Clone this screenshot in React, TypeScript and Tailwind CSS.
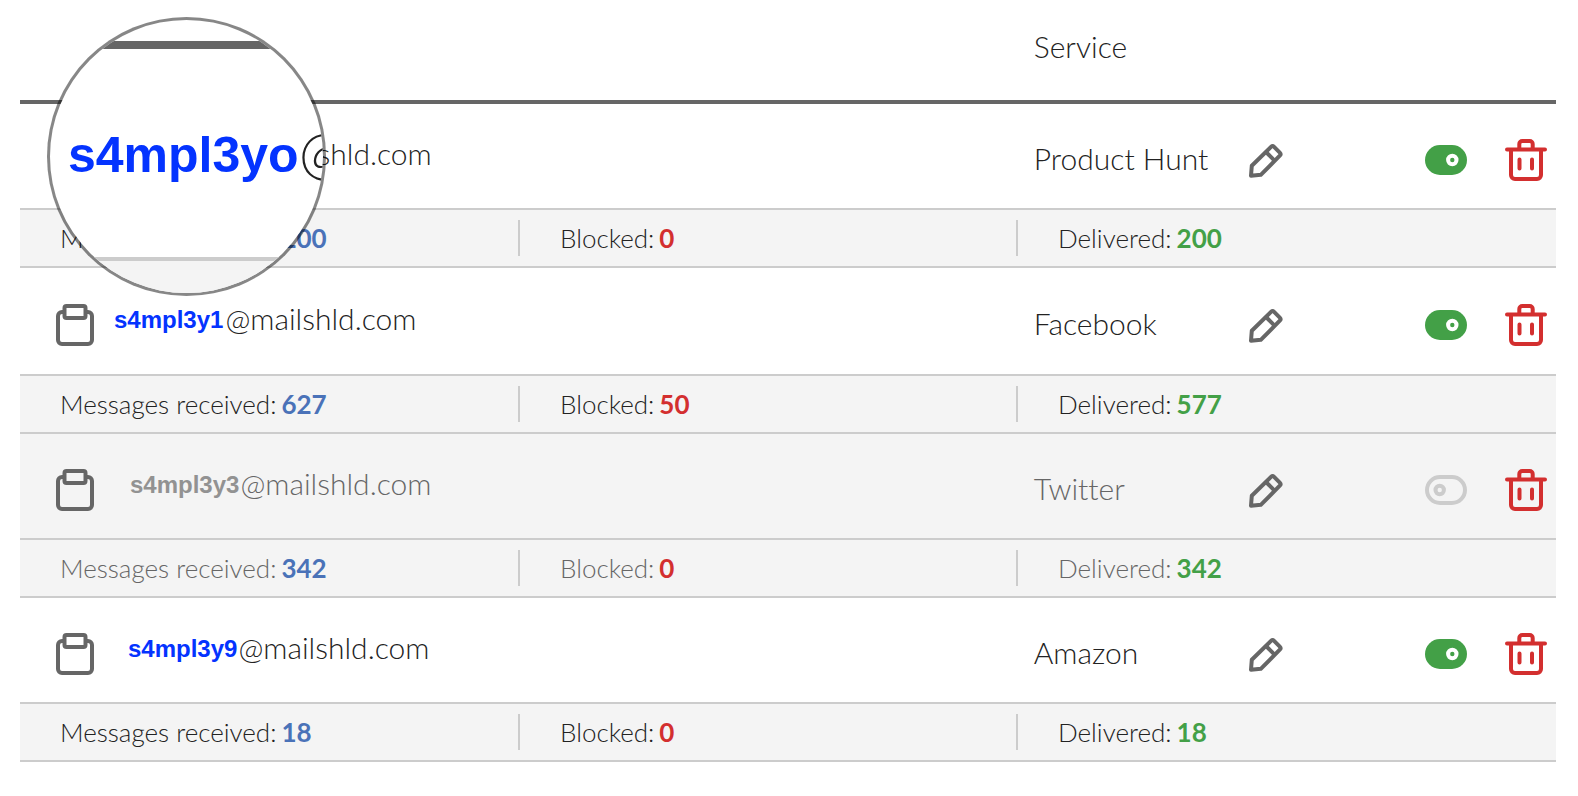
import { useState } from 'react';

interface Alias {
  id: string;
  domain: string;
  service: string;
  received: number;
  blocked: number;
  delivered: number;
  enabled: boolean;
  rowClass: string;
  indentClass: string;
  gapClass: string;
}

const initialAliases: Alias[] = [
  { id: 's4mpl3yo', domain: '@mailshld.com', service: 'Product Hunt', received: 200, blocked: 0, delivered: 200, enabled: true, rowClass: 'h-[106px]', indentClass: 'ml-9', gapClass: '' },
  { id: 's4mpl3y1', domain: '@mailshld.com', service: 'Facebook', received: 627, blocked: 50, delivered: 577, enabled: true, rowClass: 'h-[108px]', indentClass: 'ml-5', gapClass: 'gap-[2px]' },
  { id: 's4mpl3y3', domain: '@mailshld.com', service: 'Twitter', received: 342, blocked: 0, delivered: 342, enabled: false, rowClass: 'h-[106px]', indentClass: 'ml-9', gapClass: 'gap-px' },
  { id: 's4mpl3y9', domain: '@mailshld.com', service: 'Amazon', received: 18, blocked: 0, delivered: 18, enabled: true, rowClass: 'h-[106px]', indentClass: 'ml-[34px]', gapClass: 'gap-px' },
];

function ClipboardIcon() {
  return (
    <svg width="38" height="42" viewBox="0 0 38 42" fill="none" stroke="#666666" strokeWidth="4" strokeLinejoin="round">
      <path d="M8.5 8H6a4 4 0 0 0-4 4v24a4 4 0 0 0 4 4h26a4 4 0 0 0 4-4V12a4 4 0 0 0-4-4h-2.500" />
      <rect x="8.500" y="2" width="21" height="12" rx="2" />
    </svg>
  );
}

function PencilIcon() {
  return (
    <svg width="34" height="36" viewBox="0 -2 34 36" fill="none" stroke="#666666" strokeWidth="4" strokeLinejoin="round">
      <path d="M2 31.800 2.800 21.700 22 2.900a2.200 2.200 0 0 1 3.100 0l5.700 5.700a2.200 2.200 0 0 1 0 3.100L11.800 30.800z" />
      <path d="m17 8 8.800 8.800" />
    </svg>
  );
}

function ToggleIcon({ on }: { on: boolean }) {
  if (on) {
    return (
      <svg width="42" height="30" viewBox="0 0 42 30">
        <rect width="42" height="30" rx="15" fill="#43a047" />
        <circle cx="27.300" cy="15" r="4.200" fill="none" stroke="#ffffff" strokeWidth="4" />
      </svg>
    );
  }
  return (
    <svg width="42" height="30" viewBox="0 0 42 30" fill="none" stroke="#cccccc" strokeWidth="4">
      <rect x="2" y="2" width="38" height="26" rx="13" />
      <circle cx="14.700" cy="15" r="4.200" />
    </svg>
  );
}

function TrashIcon() {
  return (
    <svg width="42" height="42" viewBox="0 0 42 42" fill="none" stroke="#d32f2f" strokeWidth="4" strokeLinecap="round" strokeLinejoin="round">
      <path d="M2 10.400h38" />
      <path d="M14.300 10V5a3 3 0 0 1 3-3h7.400a3 3 0 0 1 3 3v5" strokeLinecap="butt" />
      <path d="M6 11v25a4 4 0 0 0 4 4h22a4 4 0 0 0 4-4V11" />
      <path d="M14.500 20.500v9M27 20.500v9" />
    </svg>
  );
}

function Magnifier({ id }: { id: string }) {
  return (
    <div className="absolute left-[47px] top-[17px] w-[279px] h-[279px] rounded-full border-3 border-black/47 bg-white bg-clip-padding overflow-hidden pointer-events-none" aria-hidden="true">
      <div className="h-[29px] border-b-8 border-[#666666]" />
      <div className="h-[208px] pl-[18px] pt-1 flex items-center whitespace-nowrap">
        <span className="font-['Liberation_Sans',sans-serif] font-bold text-[50px] text-[#0433ff]">{id}</span>
        <span className="text-[60px] pb-2">@</span>
      </div>
      <div className="h-10 border-t-4 border-[#cccccc] bg-[#f4f4f4]" />
    </div>
  );
}

interface StatProps {
  label: string;
  value: number;
  valueClass: string;
}

function Stat({ label, value, valueClass }: StatProps) {
  return (
    <div className="pl-10 flex gap-[5px]">
      <span>{label}:</span>
      <span className={`font-bold ${valueClass}`}>{value}</span>
    </div>
  );
}

export default function App() {
  const [aliases, setAliases] = useState(initialAliases);

  const toggleAlias = (id: string) => {
    setAliases(aliases.map((a) => (a.id === id ? { ...a, enabled: !a.enabled } : a)));
  };

  const removeAlias = (id: string) => {
    setAliases(aliases.filter((a) => a.id !== id));
  };

  return (
    <main className="relative bg-white pl-5 pr-[22px] font-['Lato',sans-serif] font-light text-[#222222] [font-variant-ligatures:none]">
      <table className="w-full table-fixed border-separate border-spacing-0">
        <thead>
          <tr className="h-[104px] text-left text-[30px]">
            <th className="w-[66%] border-b-4 border-[#666666]" aria-label="Address" />
            <th className="w-[14%] border-b-4 border-[#666666] font-light pb-2">Service</th>
            <th className="w-[20%] border-b-4 border-[#666666]" aria-label="Actions" />
          </tr>
        </thead>
        {aliases.map((alias) => (
          <tbody key={alias.id} className={alias.enabled ? 'text-[#222222]' : 'text-[#666666]'}>
            <tr className={`${alias.rowClass} text-[30px] ${alias.enabled ? 'bg-white' : 'bg-[#f4f4f4]'}`}>
              <td className="border-b-2 border-[#cccccc] pl-9 pt-2">
                <div className="flex items-center">
                  <button type="button" className="cursor-pointer" aria-label={`Copy ${alias.id}${alias.domain}`}>
                    <ClipboardIcon />
                  </button>
                  <div className={`flex items-center pb-3.5 ${alias.indentClass} ${alias.gapClass}`}>
                    <span className={`pt-1 font-['Liberation_Sans',sans-serif] font-bold text-2xl ${alias.enabled ? 'text-[#0433ff]' : 'text-[#929292]'}`}>
                      {alias.id}
                    </span>
                    <span>{alias.domain}</span>
                  </div>
                </div>
              </td>
              <td className="border-b-2 border-[#cccccc] pt-1 whitespace-nowrap">{alias.service}</td>
              <td className="border-b-2 border-[#cccccc] pt-2 pr-[9px]">
                <div className="flex items-center justify-between">
                  <button type="button" className="cursor-pointer" aria-label={`Edit ${alias.service}`}>
                    <PencilIcon />
                  </button>
                  <div className="flex items-center gap-[38px]">
                    <label className="cursor-pointer">
                      <input
                        type="checkbox"
                        className="sr-only"
                        checked={alias.enabled}
                        onChange={() => toggleAlias(alias.id)}
                        aria-label={`Forward mail from ${alias.service}`}
                      />
                      <ToggleIcon on={alias.enabled} />
                    </label>
                    <button
                      type="button"
                      onClick={() => removeAlias(alias.id)}
                      className="cursor-pointer"
                      aria-label={`Delete ${alias.service}`}
                    >
                      <TrashIcon />
                    </button>
                  </div>
                </div>
              </td>
            </tr>
            <tr className="h-[58px] bg-[#f4f4f4] text-[26px] leading-9">
              <td colSpan={3} className="border-b-2 border-[#cccccc]">
                <div className="grid grid-cols-[500fr_498fr_538fr] divide-x-2 divide-[#cccccc]">
                  <Stat label="Messages received" value={alias.received} valueClass="text-[#4a72b8]" />
                  <Stat label="Blocked" value={alias.blocked} valueClass="text-[#d32f2f]" />
                  <Stat label="Delivered" value={alias.delivered} valueClass="text-[#43a047]" />
                </div>
              </td>
            </tr>
          </tbody>
        ))}
      </table>

      <Magnifier id="s4mpl3yo" />
    </main>
  );
}
